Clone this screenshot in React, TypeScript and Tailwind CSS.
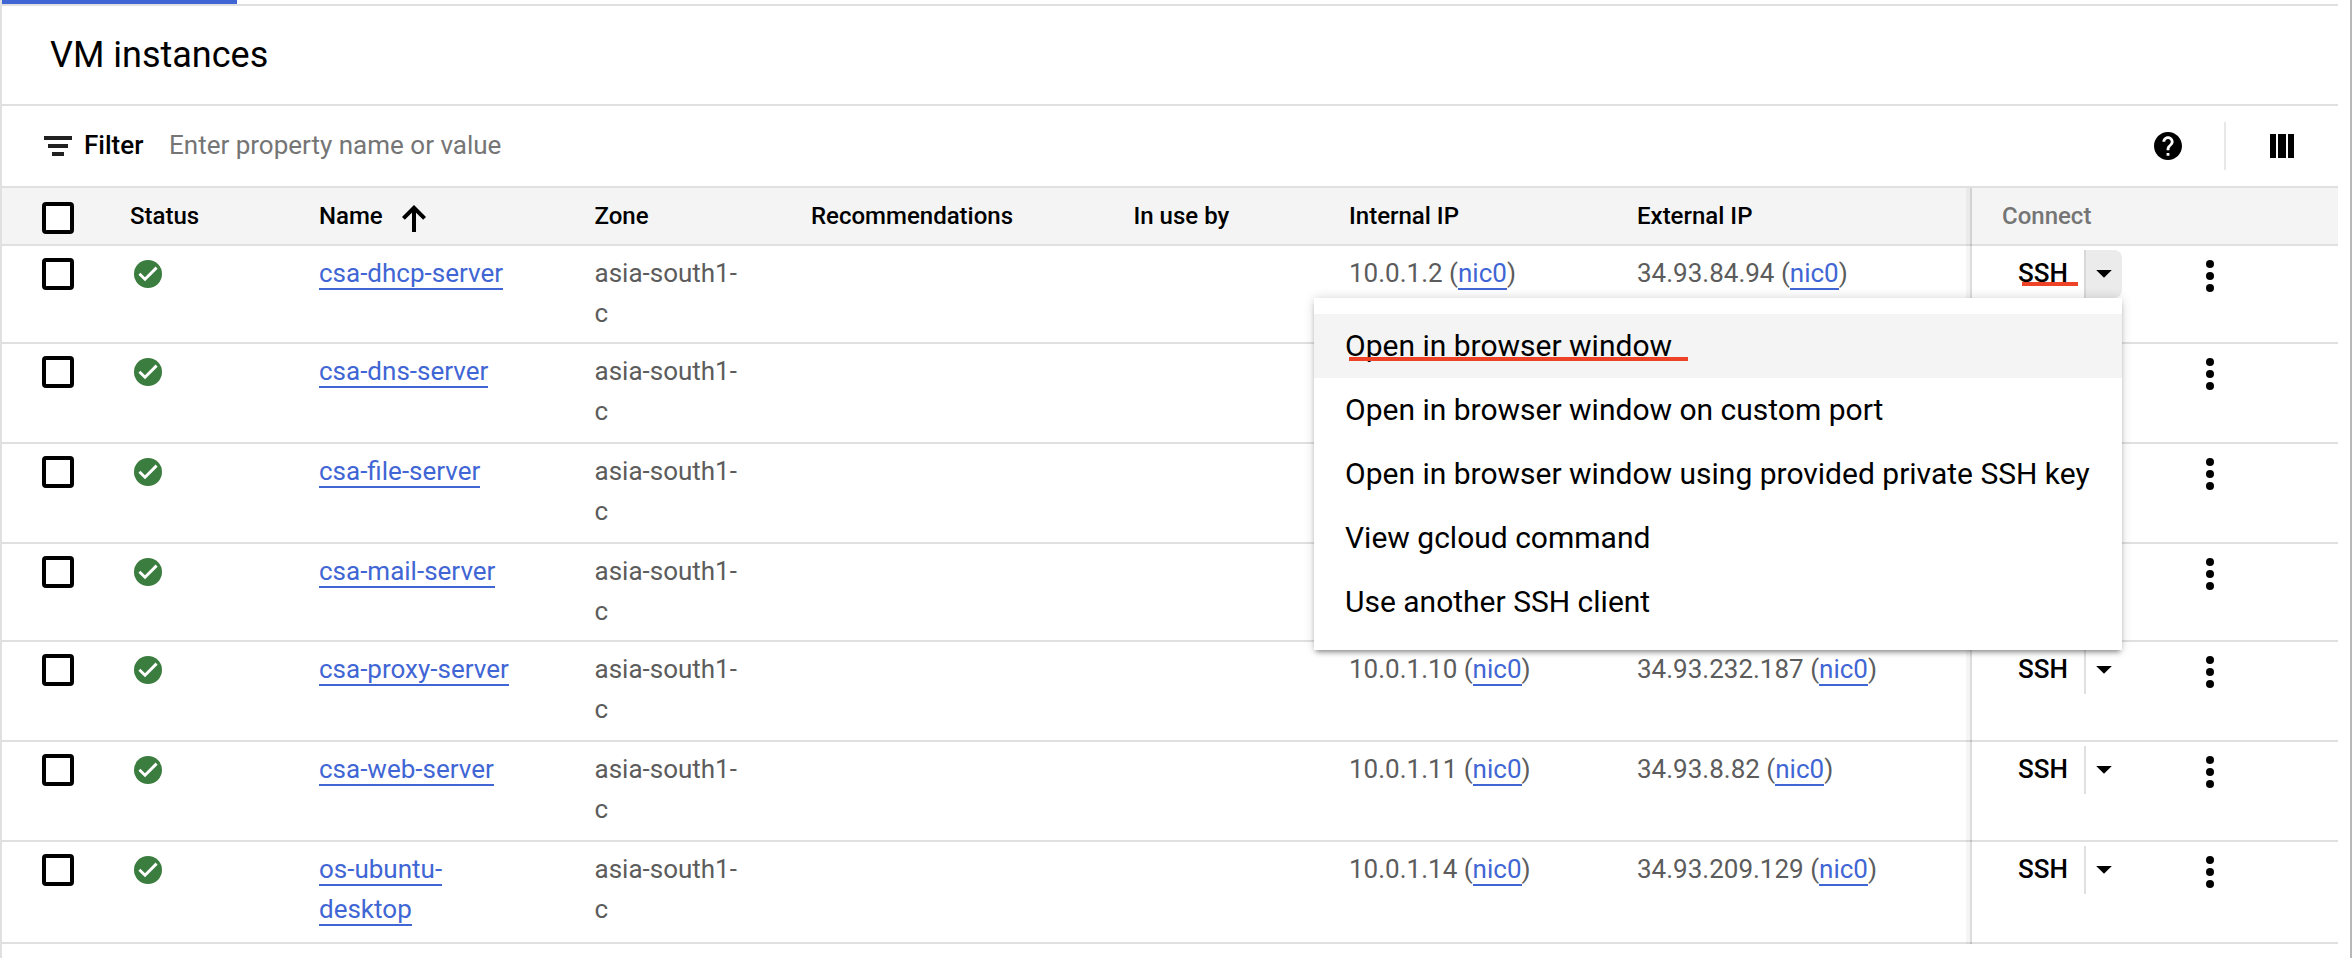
import React from "react";

type Vm = {
  name: string[];
  zone: string[];
  internalIp: string;
  externalIp: string;
  height: string;
  open?: boolean;
};

const zone = ["asia-south1-", "c"];

const vms: Vm[] = [
  { name: ["csa-dhcp-server"], zone, internalIp: "10.0.1.2", externalIp: "34.93.84.94", height: "h-[98px]", open: true },
  { name: ["csa-dns-server"], zone, internalIp: "", externalIp: "", height: "h-[100px]" },
  { name: ["csa-file-server"], zone, internalIp: "", externalIp: "", height: "h-[100px]" },
  { name: ["csa-mail-server"], zone, internalIp: "", externalIp: "", height: "h-[98px]" },
  { name: ["csa-proxy-server"], zone, internalIp: "10.0.1.10", externalIp: "34.93.232.187", height: "h-[100px]" },
  { name: ["csa-web-server"], zone, internalIp: "10.0.1.11", externalIp: "34.93.8.82", height: "h-[100px]" },
  { name: ["os-ubuntu-", "desktop"], zone, internalIp: "10.0.1.14", externalIp: "34.93.209.129", height: "h-[102px]" },
];

const menuItems = [
  "Open in browser window",
  "Open in browser window on custom port",
  "Open in browser window using provided private SSH key",
  "View gcloud command",
  "Use another SSH client",
];

const columns = "grid grid-cols-[128px_189px_275.5px_216.5px_322.5px_215.5px_288px_335px_366px] items-start";

function Checkbox() {
  return <span className="block size-8 rounded-[4px] border-4 border-black bg-white" />;
}

function StatusOk() {
  return (
    <svg className="block size-7" viewBox="0 0 28 28">
      <circle cx="14" cy="14" r="14" fill="#3a7d3e" />
      <path d="M5.4 13.8 11 19.2 22.6 7.6" fill="none" stroke="#fff" strokeWidth="2.9" />
    </svg>
  );
}

function Link({ children }: { children: React.ReactNode }) {
  return <a className="border-b-2 border-[#3f66d4] text-[#3f66d4]">{children}</a>;
}

function IpCell({ ip }: { ip: string }) {
  return (
    <div className="pt-[7px] whitespace-nowrap">
      {ip && (
        <>
          {ip} (<Link>nic0</Link>)
        </>
      )}
    </div>
  );
}

function SshMenu() {
  return (
    <div className="absolute top-12 right-0 z-20 w-[808px] bg-white py-4 shadow-[0_4px_5px_-2px_rgba(0,0,0,0.4),0_0_10px_rgba(0,0,0,0.16)]">
      {menuItems.map((item, i) => (
        <div
          key={item}
          className={
            i === 0
              ? "relative h-16 bg-[#f4f4f4] px-[31px] text-[30px] leading-[63px] whitespace-nowrap text-black"
              : "h-16 px-[31px] text-[30px] leading-[63px] whitespace-nowrap text-black"
          }
        >
          {item}
          {i === 0 && <span className="absolute top-[43px] left-[35px] h-1 w-[339px] bg-[#ee4327]" />}
        </div>
      ))}
    </div>
  );
}

function ConnectCell({ open }: { open?: boolean }) {
  return (
    <div className="flex pt-1 pl-[46px]">
      <div className="relative flex h-12 w-[104px]">
        <span className="w-[66px] text-[26px] leading-[46px] font-medium text-black">SSH</span>
        <span
          className={
            open
              ? "flex w-[38px] justify-center rounded-r-lg border-l-2 border-[#d8d8d8] bg-[#ebebeb] pt-5"
              : "flex w-[38px] justify-center border-l-2 border-[#e0e0e0] pt-5"
          }
        >
          <svg className="block h-2 w-4" viewBox="0 0 16 8">
            <path d="M.2 0h15.6L8 7.8z" />
          </svg>
        </span>
        {open && <span className="absolute top-8 left-1 h-1 w-14 bg-[#ee4327]" />}
        {open && <SshMenu />}
      </div>
      <svg className="mt-2.5 ml-[84px] block h-8 w-2" viewBox="0 0 8 32">
        <circle cx="4" cy="4" r="4" />
        <circle cx="4" cy="16" r="4" />
        <circle cx="4" cy="28" r="4" />
      </svg>
    </div>
  );
}

function VmRow({ vm }: { vm: Vm }) {
  return (
    <div className={`${columns} ${vm.height} border-b-2 border-[#e0e0e0] text-[26px] leading-10 text-[#5c5c5c]`}>
      <div className="pt-3 pl-10">
        <Checkbox />
      </div>
      <div className="pt-3.5 pl-1">
        <StatusOk />
      </div>
      <div className="pt-[7px]">
        {vm.name.map((line) => (
          <div key={line}>
            <Link>{line}</Link>
          </div>
        ))}
      </div>
      <div className="pt-[7px]">
        {vm.zone.map((line) => (
          <div key={line}>{line}</div>
        ))}
      </div>
      <div />
      <div />
      <IpCell ip={vm.internalIp} />
      <IpCell ip={vm.externalIp} />
      <ConnectCell open={vm.open} />
    </div>
  );
}

export default function App() {
  return (
    <div className="flex h-[958px] w-[2352px] overflow-hidden border-r-2 border-l-2 border-r-[#b8b8b8] border-l-[#e0e0e0] bg-white font-['Roboto',sans-serif] text-black">
      <div className="w-[2336px]">
        <div className="h-1.5 border-b-2 border-[#e0e0e0]">
          <div className="h-1 w-[235px] bg-[#3f66d4]" />
        </div>

        <h1 className="h-[100px] border-b-2 border-[#e0e0e0] pl-12 text-[36px] leading-[99px]">VM instances</h1>

        <div className="flex h-[82px] items-center border-b-2 border-[#e0e0e0] pl-[42px]">
          <svg className="h-5 w-7" viewBox="0 0 28 20" fill="#212121">
            <path d="M0 0h28v4H0zM4 8h20v4H4zM8 16h12v4H8z" />
          </svg>
          <span className="ml-3 w-[85px] pb-0.5 text-[26px] leading-10 font-medium">Filter</span>
          <span className="flex-1 pb-0.5 text-[26px] leading-10 text-[#757575]">Enter property name or value</span>
          <svg className="size-7" viewBox="2 2 20 20">
            <path d="M12 2C6.48 2 2 6.48 2 12s4.48 10 10 10 10-4.48 10-10S17.52 2 12 2zm1 17h-2v-2h2v2zm2.07-7.75l-.9.92C13.45 12.9 13 13.5 13 15h-2v-.5c0-1.1.45-2.1 1.17-2.83l1.24-1.26c.37-.36.59-.86.59-1.41 0-1.1-.9-2-2-2s-2 .9-2 2H8c0-2.21 1.79-4 4-4s4 1.79 4 4c0 .88-.36 1.68-.93 2.25z" />
          </svg>
          <div className="ml-[42px] h-12 w-0.5 bg-[#e8e8e8]" />
          <svg className="mr-11 ml-11 h-6" width="24" viewBox="0 0 24 24">
            <path d="M0 0h6v24H0zM8 0h8v24H8zM18 0h6v24h-6z" />
          </svg>
        </div>

        <div className="relative">
          <div className={`${columns} h-[58px] border-b-2 border-[#e0e0e0] bg-[#f4f4f4] text-[24px] leading-[56px] font-medium`}>
            <div className="pt-3.5 pl-10">
              <Checkbox />
            </div>
            <div>Status</div>
            <div className="flex">
              Name
              <svg className="mt-[17px] ml-[19px] h-[27px] w-6" viewBox="0 0 24 27">
                <path d="M12 27V3M1.400 13.400 12 2.800l10.600 10.600" fill="none" stroke="#000" strokeWidth="4" />
              </svg>
            </div>
            <div>Zone</div>
            <div>Recommendations</div>
            <div>In use by</div>
            <div>Internal IP</div>
            <div>External IP</div>
            <div className="pl-[30px] text-[#757575]">Connect</div>
          </div>

          {vms.map((vm) => (
            <VmRow key={vm.name[0]} vm={vm} />
          ))}

          <div className="absolute top-0 bottom-0 left-[1964px] w-1.5 border-r-2 border-black/10 bg-black/4" />
        </div>
      </div>
    </div>
  );
}
